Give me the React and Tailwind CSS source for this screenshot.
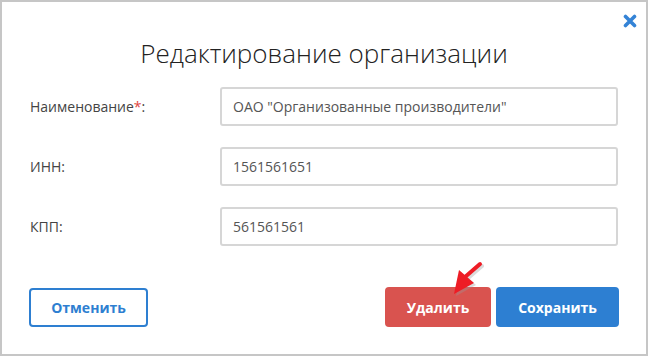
import React from "react";

const fields = [
  { label: "Наименование", required: true, value: 'ОАО "Организованные производители"' },
  { label: "ИНН", value: "1561561651" },
  { label: "КПП", value: "561561561" },
];

function Arrow() {
  return (
    <svg
      className="absolute left-[440px] top-[255px]"
      width="50"
      height="40"
      viewBox="440 255 50 40"
    >
      <g opacity="0.35" transform="translate(2 2)">
        <line x1="478" y1="262" x2="463" y2="275" stroke="#9a9a9a" strokeWidth="4" strokeLinecap="round" />
        <polygon points="457,268 472,281 452,292" fill="#9a9a9a" />
      </g>
      <line x1="478" y1="262" x2="463" y2="275" stroke="#ee1c25" strokeWidth="4" strokeLinecap="round" />
      <polygon points="457,268 472,281 452,292" fill="#ee1c25" />
    </svg>
  );
}

export default function App() {
  return (
    <div
      className="relative w-[648px] h-[356px] bg-white border-2 border-[#c6c6c6] text-[#444]"
      style={{ fontFamily: '"Open Sans", "Liberation Sans", sans-serif' }}
    >
      <button className="absolute top-[12px] right-[9px] text-[#3483d6]">
        <svg width="14" height="14" viewBox="0 0 14 14">
          <path d="M2.5 2.5 L11.5 11.5 M11.5 2.5 L2.5 11.5" stroke="currentColor" strokeWidth="3.6" strokeLinecap="round" />
        </svg>
      </button>

      <h1 className="pt-[31px] text-center text-[26px] leading-[40px] font-light text-[#222]">
        Редактирование организации
      </h1>

      <div className="mt-[14px] px-[28px] flex flex-col gap-[21px]">
        {fields.map((f) => (
          <div key={f.label} className="flex items-center">
            <label className="w-[190px] text-[14px]">
              {f.label}
              {f.required && <span className="text-[#e0443e]">*</span>}:
            </label>
            <input
              className="flex-1 h-[39px] px-[11px] border-2 border-[#d6d6d6] rounded-[3px] text-[14px] text-[#555] outline-none"
              defaultValue={f.value}
            />
          </div>
        ))}
      </div>

      <div className="mt-[41px] px-[27px] flex items-center">
        <button className="w-[119px] h-[39px] border-2 border-[#2e7fd1] rounded-[4px] text-[#2e7fd1] text-[14px] font-bold">
          Отменить
        </button>
        <div className="flex-1" />
        <button className="w-[106px] h-[40px] rounded-[4px] bg-[#d9534f] text-white text-[14px] font-bold">
          Удалить
        </button>
        <button className="ml-[5px] w-[123px] h-[40px] rounded-[4px] bg-[#2d7fd2] text-white text-[14px] font-bold">
          Сохранить
        </button>
      </div>

      <Arrow />
    </div>
  );
}
